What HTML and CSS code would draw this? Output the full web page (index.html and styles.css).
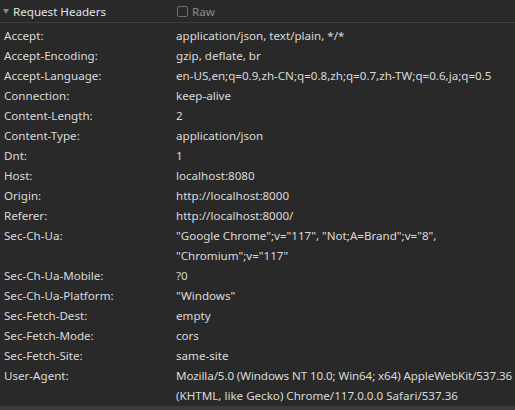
FILE: index.html
```html
<!DOCTYPE html>
<html>
<head>
<meta charset="utf-8">
<link rel="stylesheet" href="styles.css">
</head>
<body>
<div class="panel">
  <div class="head">
    <div class="title"><span class="tri"></span>Request Headers</div>
    <label class="raw"><span class="box"></span>Raw</label>
  </div>
  <div class="rows">
    <div class="row"><div class="k">Accept:</div><div class="v">application/json, text/plain, */*</div></div>
    <div class="row"><div class="k">Accept-Encoding:</div><div class="v">gzip, deflate, br</div></div>
    <div class="row"><div class="k">Accept-Language:</div><div class="v">en-US,en;q=0.9,zh-CN;q=0.8,zh;q=0.7,zh-TW;q=0.6,ja;q=0.5</div></div>
    <div class="row"><div class="k">Connection:</div><div class="v">keep-alive</div></div>
    <div class="row"><div class="k">Content-Length:</div><div class="v">2</div></div>
    <div class="row"><div class="k">Content-Type:</div><div class="v">application/json</div></div>
    <div class="row"><div class="k">Dnt:</div><div class="v">1</div></div>
    <div class="row"><div class="k">Host:</div><div class="v">localhost:8080</div></div>
    <div class="row"><div class="k">Origin:</div><div class="v">http://localhost:8000</div></div>
    <div class="row"><div class="k">Referer:</div><div class="v">http://localhost:8000/</div></div>
    <div class="row"><div class="k">Sec-Ch-Ua:</div><div class="v"><span class="ln">"Google Chrome";v="117", "Not;A=Brand";v="8",</span><span class="ln">"Chromium";v="117"</span></div></div>
    <div class="row"><div class="k">Sec-Ch-Ua-Mobile:</div><div class="v">?0</div></div>
    <div class="row"><div class="k">Sec-Ch-Ua-Platform:</div><div class="v">"Windows"</div></div>
    <div class="row"><div class="k">Sec-Fetch-Dest:</div><div class="v">empty</div></div>
    <div class="row"><div class="k">Sec-Fetch-Mode:</div><div class="v">cors</div></div>
    <div class="row"><div class="k">Sec-Fetch-Site:</div><div class="v">same-site</div></div>
    <div class="row"><div class="k">User-Agent:</div><div class="v"><span class="ln tight">Mozilla/5.0 (Windows NT 10.0; Win64; x64) AppleWebKit/537.36</span><span class="ln">(KHTML, like Gecko) Chrome/117.0.0.0 Safari/537.36</span></div></div>
  </div>
  <div class="foot"></div>
</div>
</body>
</html>
```
FILE: styles.css
```css
html, body {
  margin: 0;
  padding: 0;
  background: #292929;
}
.panel {
  width: 515px;
  height: 410px;
  display: flex;
  flex-direction: column;
  background: #292929;
  font-family: "Noto Sans", "Open Sans", sans-serif;
  font-size: 11.6px;
  color: #dadada;
  overflow: hidden;
}
.head {
  height: 23px;
  flex: none;
  display: grid;
  grid-template-columns: 176px 1fr;
  align-items: center;
  border-bottom: 1px solid #3e3e3e;
  box-sizing: border-box;
}
.title {
  display: flex;
  align-items: center;
  padding-left: 3px;
  color: #e4e4e4;
}
.tri {
  width: 0;
  height: 0;
  border-left: 3.5px solid transparent;
  border-right: 3.5px solid transparent;
  border-top: 5px solid #8a8a8a;
  margin-right: 4px;
  margin-top: 1px;
}
.raw {
  display: flex;
  align-items: center;
  color: #8c8c8c;
  padding-left: 1px;
}
.box {
  width: 9px;
  height: 9px;
  border: 1px solid #6e6e6e;
  border-radius: 2px;
  margin-right: 4px;
}
.rows {
  flex: 1;
  padding-top: 3px;
}
.row {
  display: grid;
  grid-template-columns: 172px 1fr;
  padding-left: 4px;
  line-height: 20px;
}
.v {
  white-space: nowrap;
}
.ln {
  display: block;
}
.tight {
  letter-spacing: -0.1px;
}
.foot {
  height: 4px;
  flex: none;
  background: #3c3c3c;
}
```
